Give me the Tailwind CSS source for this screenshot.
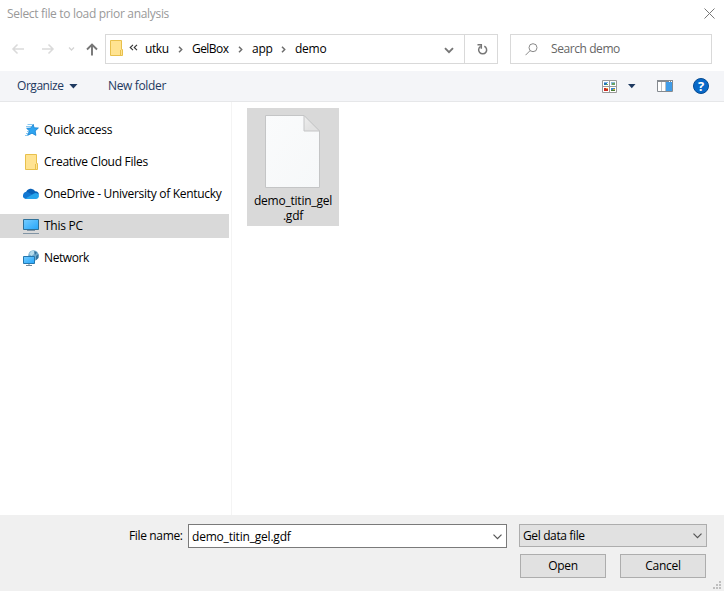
<!DOCTYPE html>
<html lang="en">
<head>
<meta charset="utf-8">
<title>Select file to load prior analysis</title>
<script src="https://cdn.jsdelivr.net/npm/@tailwindcss/browser@4"></script>
</head>
<body class="w-[724px] h-[591px] overflow-hidden bg-white text-black font-['Open_Sans','Noto_Sans',sans-serif] text-[12px] leading-4 tracking-[-0.25px] whitespace-nowrap">
<div class="flex flex-col h-[591px]">
  <header class="h-[34px] shrink-0 flex justify-between pl-[7px] pr-[9px]">
    <span class="pt-[6px] text-[#999] tracking-[-0.32px]">Select file to load prior analysis</span>
    <svg class="mt-2 w-[11px] h-[11px]" viewBox="0 0 11 11" fill="none" stroke="#777"><path d="M.5.5l10 10M10.500.5l-10 10"/></svg>
  </header>

  <nav class="h-[37px] shrink-0 flex">
    <svg class="w-[105px] h-[30px] shrink-0" viewBox="0 0 105 30" fill="none">
      <path d="M24 15H13M17.500 10.500L13 15l4.500 4.500M42 15h11M48.500 10.500L53 15l-4.500 4.500" stroke="#dadada" stroke-width="1.500"/>
      <path d="M69 13.500l2.500 2.500 2.500-2.500" stroke="#d4d4d4" stroke-width="1.300"/>
      <path d="M92 21.500V11M87 15.500l5-5 5 5" stroke="#767676" stroke-width="1.900"/>
    </svg>
    <div class="w-[393px] h-[30px] shrink-0 border border-[#d9d9d9] flex items-center">
      <svg class="ml-1 w-[13px] h-4 shrink-0 -mt-[2px]" viewBox="0 0 13 16"><path d="M.5.500h11v9h1v6H.5z" fill="#ffe391" stroke="#e8c04c"/><path d="M10.500 15V10" stroke="#e8c04c"/></svg>
      <svg class="ml-[6px] w-[9px] h-[7px] shrink-0 -mt-[3px]" viewBox="0 0 9 7" fill="none" stroke="#333" stroke-width="1.100"><path d="M4 .8L1.200 3.500 4 6.200M8 .8L5.200 3.500 8 6.200"/></svg>
      <span class="w-[33px] ml-[7px] tracking-[-0.4px]">utku</span>
      <svg class="w-[5px] h-[7px] mr-[9px] mt-px shrink-0" viewBox="0 0 5 7" fill="none" stroke="#6e6e6e" stroke-width="1.500"><path d="M1 .8l2.700 2.700L1 6.200"/></svg>
      <span class="w-[46px] tracking-[-0.55px]">GelBox</span>
      <svg class="w-[5px] h-[7px] mr-[9px] mt-px shrink-0" viewBox="0 0 5 7" fill="none" stroke="#6e6e6e" stroke-width="1.500"><path d="M1 .8l2.700 2.700L1 6.200"/></svg>
      <span class="w-[29px]">app</span>
      <svg class="w-[5px] h-[7px] mr-[9px] mt-px shrink-0" viewBox="0 0 5 7" fill="none" stroke="#6e6e6e" stroke-width="1.500"><path d="M1 .8l2.700 2.700L1 6.200"/></svg>
      <span class="grow">demo</span>
      <svg class="w-[10px] h-[7px] mr-[10px] mt-[2px] shrink-0" viewBox="0 0 10 7" fill="none" stroke="#767676" stroke-width="1.900"><path d="M1 1.200l4 4 4-4"/></svg>
      <div class="w-[33px] h-full border-l border-[#d9d9d9] flex items-center justify-center">
        <svg class="w-3 h-3 ml-px" viewBox="0 0 12 12" fill="none" stroke="#767676" stroke-width="1.500"><path d="M8.300 3.200A4 4 0 1 1 4.600 3.400"/><path d="M1.500 1.700h3.800v4"/></svg>
      </div>
    </div>
    <div class="ml-3 w-[202px] h-[30px] shrink-0 border border-[#d9d9d9] flex items-center text-[#666]">
      <svg class="ml-[14px] w-[13px] h-[13px]" viewBox="0 0 13 13" fill="none" stroke="#8a8a8a"><circle cx="8" cy="4.700" r="4"/><path d="M5.200 7.500L.5 12.200"/></svg>
      <span class="ml-[13px] tracking-[-0.42px]">Search demo</span>
    </div>
  </nav>

  <div class="h-[31px] shrink-0 bg-[#f4f5f8] border-b border-[#e6e7e9] flex items-center pl-[17px] pr-[15px] text-[#1e3960]">
    <span class="w-[52px] tracking-[-0.45px]">Organize</span>
    <svg class="w-[9px] h-[5px]" viewBox="0 0 9 5" fill="#1e3960"><path d="M.3 0h8.200L4.400 4.500z"/></svg>
    <span class="ml-[30px] grow tracking-[-0.35px]">New folder</span>
    <svg class="w-[15px] h-[13px]" viewBox="0 0 15 13"><path d="M.5.500h14v12H.5zM7.500 0v13M0 6.500h15" fill="#fff" stroke="#9a9a9a"/><path d="M2 2h4v1H2z" fill="#7fb4e6"/><path d="M2 3h3v2H2z" fill="#2674b7"/><path d="M4 4h2v1H4z" fill="#54a45b"/><path d="M9 2h4v3H9z" fill="#8cb9d8"/><path d="M10 3h3v2h-3z" fill="#66a263"/><path d="M2 8h4v3H2z" fill="#c92c22"/><path d="M4 8h2v1H4z" fill="#f0a03a"/><path d="M9 8h4v3H9z" fill="#3d86c5"/><path d="M9 10h4v1H9z" fill="#4b7d34"/><path d="M11 9h2v1h-2z" fill="#e6b422"/></svg>
    <svg class="ml-[11px] w-2 h-[5px]" viewBox="0 0 8 5" fill="#1e3960"><path d="M0 0h7.500L3.800 4.300z"/></svg>
    <svg class="ml-[21px] w-4 h-3" viewBox="0 0 16 12"><path d="M.5.500h15v11H.5z" fill="#fff" stroke="#858a90"/><path d="M0 0h16v2H0z" fill="#858a90"/><path d="M12 1h1v1h-1zM14 1h1v1h-1z" fill="#fff"/><path d="M4.500 2v9" stroke="#bcc0c4"/><path d="M9 2h6v9H9z" fill="#3f9ce8"/><path d="M8.500 2v9" stroke="#bcc0c4"/></svg>
    <div class="ml-5 w-4 h-4 rounded-full bg-[#0869c9] border border-[#054a91] flex items-center justify-center text-white font-bold text-[13px] tracking-normal">?</div>
  </div>

  <main class="grow flex">
    <aside class="w-[232px] shrink-0 border-r border-[#f4f4f4] pt-4 pr-[2px] flex flex-col gap-2">
      <div class="h-6 pl-[23px] flex items-center gap-[5px]">
        <svg class="w-4 h-4" viewBox="0 0 16 16"><path d="M10.200 2.300l.9 3.500 4.300.2-3.200 2.900.7 4.500-3.900-2.200-4.500 2.200 1.900-4.500L3.600 6.300l4.200-.3z" fill="#2fa4f0" stroke="#1482d2" stroke-width=".8"/><path d="M4.500 2.500h5M3 4.500h5M4 9.500h2M3 11.500h2M2 13.500h3" stroke="#7dc3ef" stroke-width=".9"/></svg>
        <span>Quick access</span>
      </div>
      <div class="h-6 pl-[23px] flex items-center gap-[5px]">
        <svg class="w-4 h-4" viewBox="0 0 16 16"><path d="M2.500.5h11v9h1v6h-12z" fill="#ffe391" stroke="#e8c04c"/><path d="M12.500 15v-5" stroke="#e8c04c"/></svg>
        <span class="tracking-[-0.27px]">Creative Cloud Files</span>
      </div>
      <div class="h-6 pl-[23px] flex items-center gap-[5px]">
        <svg class="w-4 h-4" viewBox="0 0 16 16"><path d="M3 6.500a5 5 0 0 1 9.200-1.300C14.600 5.200 16 7 16 8.500L9 10 2 9z" fill="#0a62b8"/><path d="M0 9.200A3.500 3.500 0 0 1 4.500 6L10 9l-6 3.900H3A3 3 0 0 1 0 9.200z" fill="#1378d2"/><path d="M2.500 12.500l8.500-5a3.300 3.300 0 0 1 5 2.300c0 2-1.400 3.200-3 3.200H4z" fill="#27a4ec"/></svg>
        <span class="tracking-[-0.3px]">OneDrive - University of Kentucky</span>
      </div>
      <div class="h-6 pl-[23px] flex items-center gap-[5px] bg-[#d9d9d9]">
        <svg class="w-4 h-4" viewBox="0 0 16 16"><defs><linearGradient id="screen" x2="1" y2="1"><stop stop-color="#77cdff"/><stop offset="1" stop-color="#24a5fa"/></linearGradient></defs><path d="M.5 1.500h15v10H.5z" fill="url(#screen)" stroke="#2f7199"/><path d="M4 12.500h8M0 15.500h16" stroke="#8194a4"/></svg>
        <span>This PC</span>
      </div>
      <div class="h-6 pl-[23px] flex items-center gap-[5px]">
        <svg class="w-4 h-4" viewBox="0 0 16 16"><circle cx="10.500" cy="5.500" r="5.200" fill="#6faacd"/><path d="M6 4l3-3.500 3 .5-1 3-2.500 2z" fill="#b6dcec"/><path d="M11 1l3 1.500-2 2.500zM13 6l2.500-2v4L13 10z" fill="#35749e"/><path d="M.5 6.500h11v7H.5z" fill="url(#screen)" stroke="#2477ae"/><path d="M6 14v1M3 15.500h6" stroke="#71889a"/></svg>
        <span class="tracking-[-0.4px]">Network</span>
      </div>
    </aside>
    <section class="pt-[6px] pl-[15px]">
      <div class="w-[92px] h-[118px] bg-[#d9d9d9] flex flex-col items-center pt-[7px]">
        <svg class="w-[55px] h-[74px] shrink-0 -ml-[2px]" viewBox="0 0 55 74"><defs><linearGradient id="paper" x2="1" y2="1"><stop stop-color="#fafbfc"/><stop offset="1" stop-color="#f6f8f9"/></linearGradient><linearGradient id="fold" x2="1" y2="1"><stop stop-color="#eee"/><stop offset=".6" stop-color="#e2e2e2"/></linearGradient></defs><path d="M.5.500H39l15.500 15.500v56.500H.5z" fill="url(#paper)" stroke="#c4c5c6"/><path d="M39 .5v15.500h15.500z" fill="url(#fold)" stroke="#c4c5c6"/></svg>
        <div class="mt-1 text-center leading-[15px] tracking-[-0.22px]">demo_titin_gel<br>.gdf</div>
      </div>
    </section>
  </main>

  <footer class="h-[76px] shrink-0 bg-[#f0f0f0] flex pt-[9px] relative">
    <label class="w-[188px] pl-[129px] pt-1 shrink-0 tracking-[-0.35px]">File name:</label>
    <div class="w-[319px] h-6 shrink-0 bg-white border border-[#7a7a7a] flex items-center justify-between pl-[3px] pr-1">
      <span class="tracking-[-0.2px] pt-px">demo_titin_gel.gdf</span>
      <svg class="w-[9px] h-[6px] mt-px" viewBox="0 0 9 6" fill="none" stroke="#555" stroke-width="1.200"><path d="M.5.700l4 4 4-4"/></svg>
    </div>
    <div class="ml-3 w-[188px] shrink-0">
      <div class="h-[23px] bg-[#e1e1e1] border border-[#adadad] flex items-center justify-between pl-[3px] pr-1">
        <span class="tracking-[-0.37px]">Gel data file</span>
        <svg class="w-[9px] h-[6px] mt-px" viewBox="0 0 9 6" fill="none" stroke="#555" stroke-width="1.200"><path d="M.5.700l4 4 4-4"/></svg>
      </div>
      <div class="mt-[7px] flex gap-[14px] pl-px">
        <button class="w-[86px] h-6 bg-[#e1e1e1] border border-[#adadad] tracking-[-0.35px]">Open</button>
        <button class="w-[86px] h-6 bg-[#e1e1e1] border border-[#adadad]">Cancel</button>
      </div>
    </div>
    <svg class="absolute right-[3px] bottom-[2px] w-2 h-2" viewBox="0 0 8 8" fill="#bfbfbf"><path d="M6 0h2v2H6zM3 3h2v2H3zM6 3h2v2H6zM0 6h2v2H0zM3 6h2v2H3zM6 6h2v2H6z"/></svg>
  </footer>
</div>
</body>
</html>
